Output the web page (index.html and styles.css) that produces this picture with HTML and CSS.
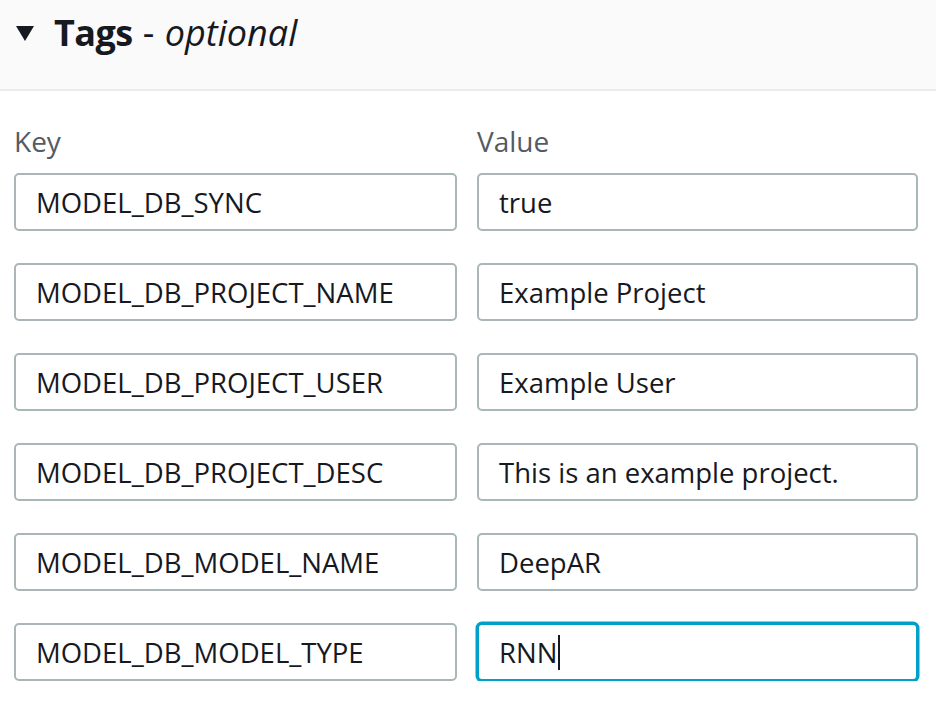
FILE: index.html
```html
<!DOCTYPE html>
<html lang="en">
<head>
<meta charset="utf-8">
<title>Tags - optional</title>
<link rel="stylesheet" href="styles.css">
</head>
<body>
<section class="tags">
  <header class="tags-header">
    <svg class="toggle-icon" width="18" height="16" viewBox="0 0 18 16" aria-hidden="true">
      <polygon points="0,0 18,0 9,15" fill="#16191f"/>
    </svg>
    <h2 class="title"><span class="title-main">Tags</span> <span class="dash">-</span> <em class="optional">optional</em></h2>
  </header>
  <div class="tags-body">
    <div class="labels">
      <div class="label">Key</div>
      <div class="label">Value</div>
    </div>
    <div class="rows">
      <div class="row">
        <div class="input">MODEL_DB_SYNC</div>
        <div class="input">true</div>
      </div>
      <div class="row">
        <div class="input">MODEL_DB_PROJECT_NAME</div>
        <div class="input">Example Project</div>
      </div>
      <div class="row">
        <div class="input">MODEL_DB_PROJECT_USER</div>
        <div class="input">Example User</div>
      </div>
      <div class="row">
        <div class="input">MODEL_DB_PROJECT_DESC</div>
        <div class="input">This is an example project.</div>
      </div>
      <div class="row">
        <div class="input">MODEL_DB_MODEL_NAME</div>
        <div class="input">DeepAR</div>
      </div>
      <div class="row">
        <div class="input">MODEL_DB_MODEL_TYPE</div>
        <div class="input input-focused">RNN<span class="caret"></span></div>
      </div>
    </div>
  </div>
</section>
</body>
</html>
```

FILE: styles.css
```css
* {
  box-sizing: border-box;
}

html, body {
  margin: 0;
  padding: 0;
  background: #ffffff;
}

body {
  font-family: "Open Sans", "Noto Sans", sans-serif;
  color: #16191f;
}

.tags-header {
  height: 91px;
  background: #fafafa;
  border-bottom: 2px solid #eaeded;
  display: flex;
  align-items: flex-start;
  padding: 0 0 0 16px;
}

.toggle-icon {
  display: block;
  margin-top: 26px;
  flex: none;
}

.title {
  margin: 0 0 0 20px;
  font-size: 36px;
  line-height: 48px;
  font-weight: 700;
  padding-top: 9px;
  word-spacing: 1px;
}

.title-main {
  letter-spacing: -0.6px;
}

.dash {
  font-weight: 400;
}

.optional {
  font-weight: 400;
  font-style: italic;
}

.tags-body {
  padding: 30px 18px 0 14px;
}

.labels,
.row {
  display: grid;
  grid-template-columns: 443px 441px;
  column-gap: 20px;
}

.label {
  font-size: 28px;
  line-height: 40px;
  color: #545b64;
}

.rows {
  margin-top: 12px;
  display: flex;
  flex-direction: column;
  gap: 32px;
}

.input {
  height: 58px;
  border: 2px solid #aab7b8;
  border-radius: 5px;
  padding: 0 20px;
  display: flex;
  align-items: center;
  font-size: 27.5px;
  color: #16191f;
  white-space: nowrap;
  background: #ffffff;
}

.input-focused {
  border-color: #00a1c9;
  box-shadow: 0 0 0 1.5px #00a1c9;
}

.caret {
  display: inline-block;
  width: 2px;
  height: 35px;
  margin-left: 1px;
  background: #16191f;
}
```
